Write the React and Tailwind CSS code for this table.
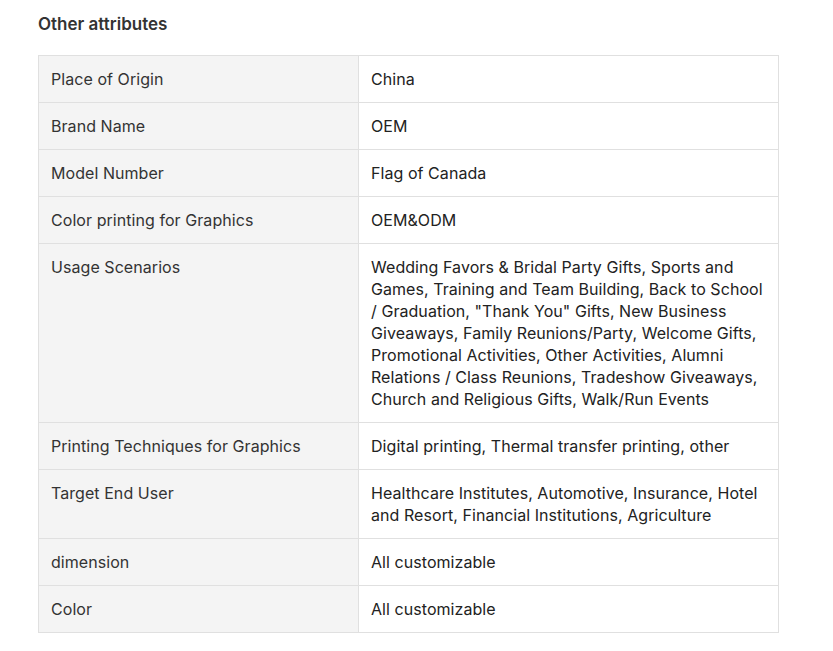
import React from "react";

const rows = [
  ["Place of Origin", "China"],
  ["Brand Name", "OEM"],
  ["Model Number", "Flag of Canada"],
  ["Color printing for Graphics", "OEM&ODM"],
  [
    "Usage Scenarios",
    'Wedding Favors & Bridal Party Gifts, Sports and Games, Training and Team Building, Back to School / Graduation, "Thank You" Gifts, New Business Giveaways, Family Reunions/Party, Welcome Gifts, Promotional Activities, Other Activities, Alumni Relations / Class Reunions, Tradeshow Giveaways, Church and Religious Gifts, Walk/Run Events',
  ],
  ["Printing Techniques for Graphics", "Digital printing, Thermal transfer printing, other"],
  [
    "Target End User",
    "Healthcare Institutes, Automotive, Insurance, Hotel and Resort, Financial Institutions, Agriculture",
  ],
  ["dimension", "All customizable"],
  ["Color", "All customizable"],
];

export default function App() {
  return (
    <div className="bg-white min-h-[651px] pl-[38px] pt-[13px] font-['Inter',sans-serif]">
      <h2 className="text-[17px] leading-[22px] font-semibold text-[#333]">Other attributes</h2>
      <table className="mt-[20px] w-[741px] border-collapse table-fixed text-[16px] leading-[22px] tracking-[0.06px]">
        <colgroup>
          <col className="w-[320px]" />
          <col />
        </colgroup>
        <tbody>
          {rows.map(([k, v]) => (
            <tr key={k}>
              <td className="border border-[#e0e0e0] bg-[#f4f4f4] px-[12px] py-[12px] align-top text-[#333]">{k}</td>
              <td className="border border-[#e0e0e0] bg-white px-[12px] py-[12px] align-top text-[#222]">{v}</td>
            </tr>
          ))}
        </tbody>
      </table>
    </div>
  );
}
